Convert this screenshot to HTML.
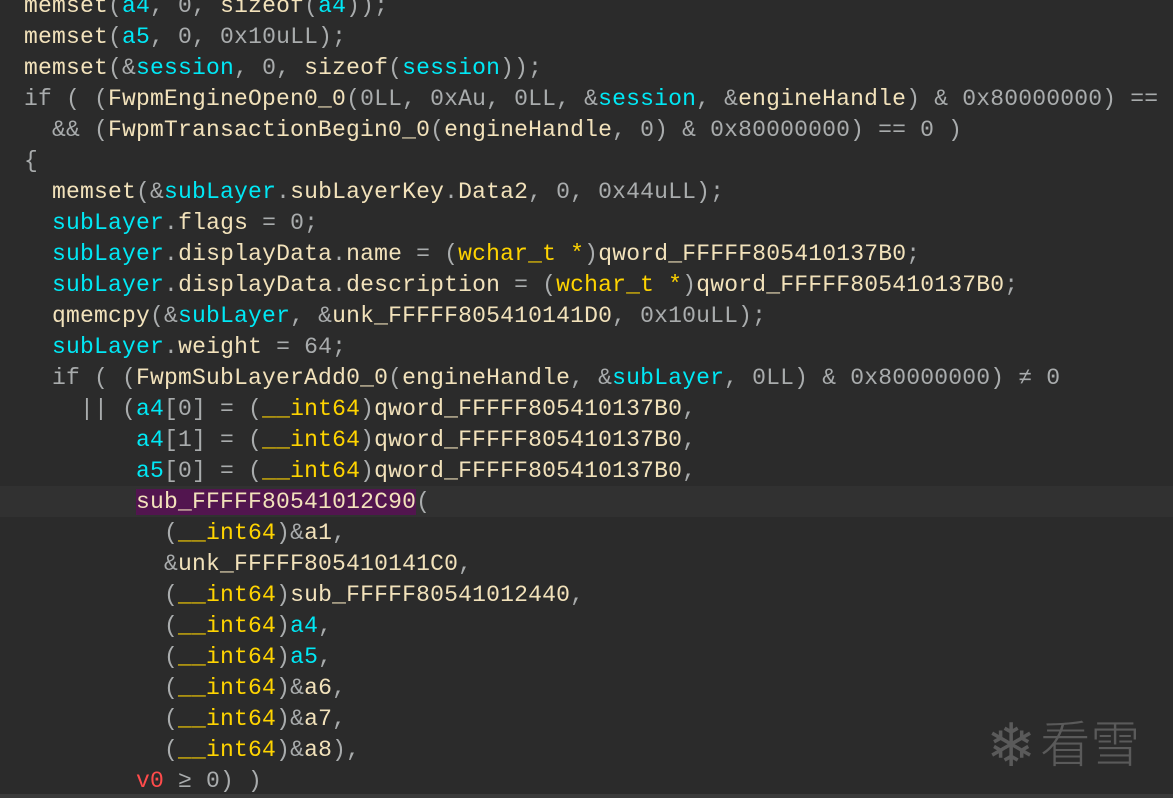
<!DOCTYPE html>
<html><head><meta charset="utf-8"><style>
html,body{margin:0;padding:0;background:#2b2b2b;width:1173px;height:798px;overflow:hidden;position:relative}
pre{margin:0;position:absolute;left:24px;top:-9px;font-family:"Liberation Mono","DejaVu Sans Mono",monospace;font-size:23px;letter-spacing:0.2px;line-height:31px;color:#f2e2bb}
.g{color:#a9acad}.c{color:#00e8f5}.y{color:#ffd400}.r{color:#ff4b4b}
.hl{position:absolute;left:0;top:486px;width:1173px;height:31px;background:#313131}
.p{background:#52154f}
.bot{position:absolute;left:0;top:794px;width:1173px;height:4px;background:#3a3a3a}
.wm{position:absolute;left:986px;top:706px;color:#5a5a5a;font-family:"Noto Sans CJK SC",sans-serif;font-size:50px;line-height:70px;font-weight:300;white-space:nowrap}
.wm span{font-size:60px;vertical-align:-4px;margin-right:4px}
</style></head><body>
<div class="hl"></div>
<div class="bot"></div>
<pre>memset<span class="g">(</span><span class="c">a4</span><span class="g">, 0, </span>sizeof<span class="g">(</span><span class="c">a4</span><span class="g">));</span>
memset<span class="g">(</span><span class="c">a5</span><span class="g">, 0, 0x10uLL);</span>
memset<span class="g">(&amp;</span><span class="c">session</span><span class="g">, 0, </span>sizeof<span class="g">(</span><span class="c">session</span><span class="g">));</span>
<span class="g">if ( (</span>FwpmEngineOpen0_0<span class="g">(0LL, 0xAu, 0LL, &amp;</span><span class="c">session</span><span class="g">, &amp;</span>engineHandle<span class="g">) &amp; 0x80000000) == 0</span>
<span class="g">  &amp;&amp; (</span>FwpmTransactionBegin0_0<span class="g">(</span>engineHandle<span class="g">, 0) &amp; 0x80000000) == 0 )</span>
<span class="g">{</span>
  memset<span class="g">(&amp;</span><span class="c">subLayer</span><span class="g">.</span>subLayerKey<span class="g">.</span>Data2<span class="g">, 0, 0x44uLL);</span>
  <span class="c">subLayer</span><span class="g">.</span>flags <span class="g">= 0;</span>
  <span class="c">subLayer</span><span class="g">.</span>displayData<span class="g">.</span>name <span class="g">= (</span><span class="y">wchar_t *</span><span class="g">)</span>qword_FFFFF805410137B0<span class="g">;</span>
  <span class="c">subLayer</span><span class="g">.</span>displayData<span class="g">.</span>description <span class="g">= (</span><span class="y">wchar_t *</span><span class="g">)</span>qword_FFFFF805410137B0<span class="g">;</span>
  qmemcpy<span class="g">(&amp;</span><span class="c">subLayer</span><span class="g">, &amp;</span>unk_FFFFF805410141D0<span class="g">, 0x10uLL);</span>
  <span class="c">subLayer</span><span class="g">.</span>weight <span class="g">= 64;</span>
<span class="g">  if ( (</span>FwpmSubLayerAdd0_0<span class="g">(</span>engineHandle<span class="g">, &amp;</span><span class="c">subLayer</span><span class="g">, 0LL) &amp; 0x80000000) ≠ 0</span>
<span class="g">    || (</span><span class="c">a4</span><span class="g">[0] = (</span><span class="y">__int64</span><span class="g">)</span>qword_FFFFF805410137B0<span class="g">,</span>
        <span class="c">a4</span><span class="g">[1] = (</span><span class="y">__int64</span><span class="g">)</span>qword_FFFFF805410137B0<span class="g">,</span>
        <span class="c">a5</span><span class="g">[0] = (</span><span class="y">__int64</span><span class="g">)</span>qword_FFFFF805410137B0<span class="g">,</span>
        <span class="p">sub_FFFFF80541012C90</span><span class="g">(</span>
<span class="g">          (</span><span class="y">__int64</span><span class="g">)&amp;</span>a1<span class="g">,</span>
<span class="g">          &amp;</span>unk_FFFFF805410141C0<span class="g">,</span>
<span class="g">          (</span><span class="y">__int64</span><span class="g">)</span>sub_FFFFF80541012440<span class="g">,</span>
<span class="g">          (</span><span class="y">__int64</span><span class="g">)</span><span class="c">a4</span><span class="g">,</span>
<span class="g">          (</span><span class="y">__int64</span><span class="g">)</span><span class="c">a5</span><span class="g">,</span>
<span class="g">          (</span><span class="y">__int64</span><span class="g">)&amp;</span>a6<span class="g">,</span>
<span class="g">          (</span><span class="y">__int64</span><span class="g">)&amp;</span>a7<span class="g">,</span>
<span class="g">          (</span><span class="y">__int64</span><span class="g">)&amp;</span>a8<span class="g">),</span>
        <span class="r">v0</span><span class="g"> ≥ 0) )</span></pre>
<div class="wm"><span>❄</span>看雪</div>
</body></html>
